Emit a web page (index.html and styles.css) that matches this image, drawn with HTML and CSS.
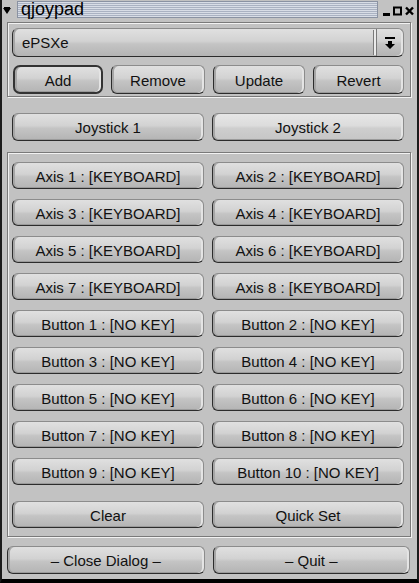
FILE: index.html
```html
<!DOCTYPE html>
<html lang="en">
    <head>
        <meta charset="UTF-8">
        <meta name="viewport" content="width=device-width,initial-scale=1.0">
        <title>qjoypad</title>
        <link rel="stylesheet" href="styles.css">
    </head>
    <body>
        <div class="window">
            <div class="titlebar">
                <svg class="menu-arrow" width="8" height="8" viewBox="0 0 8 8"><path d="M0 1h8L4 7z M1 0h6v1H1z" fill="#000"/></svg>
                <div class="title">qjoypad</div>
                <div class="wm-buttons">
                    <svg width="7" height="10" viewBox="0 0 7 10"><rect x="0" y="7" width="7" height="3" fill="#000"/></svg>
                    <svg width="9" height="10" viewBox="0 0 9 10"><rect x="1" y="1.5" width="7" height="7" fill="none" stroke="#000" stroke-width="2"/></svg>
                    <svg width="9" height="10" viewBox="0 0 9 10"><path d="M1 1.5l7 7M8 1.5l-7 7" stroke="#000" stroke-width="2.4"/></svg>
                </div>
            </div>

            <div class="group top-group">
                <div class="combo">
                    <span class="combo-text">ePSXe</span>
                    <span class="combo-btn">
                        <svg width="10" height="12" viewBox="0 0 10 12"><rect x="0" y="0" width="10" height="2" fill="#000"/><path d="M3 4h4v3h3l-5 5-5-5h3z" fill="#000"/></svg>
                    </span>
                </div>
                <div class="row4">
                    <button class="btn focused">Add</button>
                    <button class="btn">Remove</button>
                    <button class="btn">Update</button>
                    <button class="btn">Revert</button>
                </div>
            </div>

            <div class="tabs">
                <button class="btn tab">Joystick 1</button>
                <button class="btn tab active">Joystick 2</button>
            </div>

            <div class="group key-group">
                <div class="grid2 keys" id="keys"></div>
                <div class="grid2 actions">
                    <button class="btn key">Clear</button>
                    <button class="btn key">Quick Set</button>
                </div>
            </div>

            <div class="grid2 bottom">
                <button class="btn key">&ndash; Close Dialog &ndash;</button>
                <button class="btn key">&ndash; Quit &ndash;</button>
            </div>
        </div>
        <script>
const keys = document.getElementById("keys");
const labels = [];
for (let i = 1; i <= 8; i++) labels.push("Axis " + i + " : [KEYBOARD]");
for (let i = 1; i <= 10; i++) labels.push("Button " + i + " : [NO KEY]");

labels.forEach(text => {
    const b = document.createElement("button");
    b.className = "btn key";
    b.textContent = text;
    keys.appendChild(b);
});
        </script>
    </body>
</html>
```

FILE: styles.css
```css
body {
    margin: 0;
    font-family: 'Liberation Sans', Arial, sans-serif;
    background: #c2c2c2;
}

.window {
    width: 419px;
    height: 583px;
    box-sizing: border-box;
    background: #c2c2c2;
    border-left: 2px solid #1c1c1c;
    border-right: 2px solid #1c1c1c;
    border-bottom: 4px solid #000;
    display: flex;
    flex-direction: column;
}

/* title bar */
.titlebar {
    height: 21px;
    display: flex;
    align-items: center;
}

.menu-arrow {
    margin: 0 6px 0 1px;
}

.title {
    flex: 1;
    height: 15px;
    margin-top: -2px;
    line-height: 15px;
    padding-left: 3px;
    font-size: 18px;
    color: #000;
    border: 1px solid #8a92a2;
    background: repeating-linear-gradient(#d8dde6 0 1px, #aab2c2 1px 2px);
}

.wm-buttons {
    display: flex;
    gap: 3px;
    margin: 0 3px 0 5px;
}

/* etched group frames */
.group {
    margin: 0 6px 0 5px;
    border: 1px solid #7a7a7a;
    box-shadow: inset 1px 1px 0 #f2f2f2, 1px 1px 0 #f2f2f2;
}

.top-group {
    margin-top: 1px;
    padding: 5px 6px 2px 4px;
    display: flex;
    flex-direction: column;
    gap: 8px;
}

.key-group {
    margin-top: 11px;
    padding: 9px 6px 8px 4px;
}

/* buttons */
.btn {
    font-family: 'Liberation Sans', Arial, sans-serif;
    font-size: 15px;
    color: #111;
    padding: 1px 0 0;
    border: 1px solid #8c8c8c;
    border-left-color: #2c2c2c;
    border-bottom-color: #2c2c2c;
    border-radius: 6px;
    background: linear-gradient(#e0e0e0, #d2d2d2 45%, #c4c4c4 55%, #b4b4b4);
    box-shadow: inset -2px 0 0 #e4e4e4, inset 2px 0 0 #a6a6a6, inset 0 -1px 0 #9a9a9a;
    cursor: pointer;
}

.btn.focused {
    border: 2px solid #333;
    border-radius: 7px;
}

.btn.tab.active {
    background: linear-gradient(#e6e6e6, #dcdcdc 45%, #cecece 55%, #c6c6c6);
}

.combo {
    height: 29px;
    box-sizing: border-box;
    display: flex;
    align-items: center;
    border: 1px solid #8c8c8c;
    border-left-color: #2c2c2c;
    border-bottom-color: #2c2c2c;
    border-radius: 6px;
    background: linear-gradient(#e0e0e0, #d2d2d2 45%, #c4c4c4 55%, #b4b4b4);
    box-shadow: inset -2px 0 0 #e4e4e4, inset 2px 0 0 #a6a6a6;
}

.combo-text {
    flex: 1;
    padding-left: 9px;
    font-size: 15px;
    color: #111;
}

.combo-btn {
    height: 100%;
    width: 26px;
    display: flex;
    align-items: center;
    justify-content: center;
    border-left: 1px solid #7a7a7a;
    box-shadow: -3px 0 0 -1px #eaeaea, -4px 0 0 -1px #7a7a7a;
}

.row4 {
    display: grid;
    grid-template-columns: 90px 94px 92px 91px;
    gap: 8px;
    height: 29px;
    padding-left: 1px;
}

.tabs {
    margin: 16px 13px 0 10px;
    display: grid;
    grid-template-columns: 1fr 1fr;
    gap: 8px;
    height: 28px;
}

.grid2 {
    display: grid;
    grid-template-columns: 1fr 1fr;
    column-gap: 8px;
}

.keys {
    row-gap: 10px;
    grid-auto-rows: 27px;
}

.actions {
    margin-top: 16px;
    grid-auto-rows: 27px;
}

.bottom {
    margin: 9px 7px 0 5px;
    grid-auto-rows: 28px;
}
```
